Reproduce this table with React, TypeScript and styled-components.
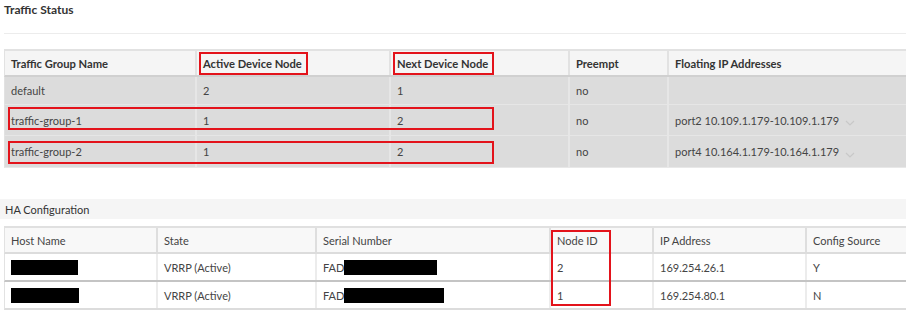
import React from 'react'
import styled, { createGlobalStyle } from 'styled-components'

const GlobalStyle = createGlobalStyle`
  html, body {
    margin: 0;
    padding: 0;
    background: #fff;
    font-family: Lato, "Open Sans", Arial, sans-serif;
    color: #333;
  }
`

const trafficCols = '192px 194px 179px 99px 1fr'
const haCols = '153px 159px 234px 103px 153px 1fr'

const trafficRows = [
  { name: 'default', active: '2', next: '1', preempt: 'no', ip: '', h: 28 },
  { name: 'traffic-group-1', active: '1', next: '2', preempt: 'no', ip: 'port2 10.109.1.179-10.109.1.179', h: 31 },
  { name: 'traffic-group-2', active: '1', next: '2', preempt: 'no', ip: 'port4 10.164.1.179-10.164.1.179', h: 32 },
]

const haRows = [
  { host: 67, serial: 93, state: 'VRRP (Active)', node: '2', ip: '169.254.26.1', src: 'Y' },
  { host: 68, serial: 100, state: 'VRRP (Active)', node: '1', ip: '169.254.80.1', src: 'N' },
]

const Page = styled.div`
  width: 906px;
  height: 323px;
  overflow: hidden;
  position: relative;
`

const Title = styled.div`
  height: 34px;
  box-sizing: border-box;
  padding: 2px 0 0 0;
  margin-left: 4px;
  font-size: 12px;
  font-weight: 700;
  color: #333;
  border-bottom: 1px solid #ececec;
`

const Table = styled.div`
  position: relative;
  margin: 15px 0 0 4px;
  width: 906px;
`

const Row = styled.div<{ $cols: string; $h: number; $bg: string; $line: string; $lineW?: number }>`
  display: grid;
  grid-template-columns: ${p => p.$cols};
  height: ${p => p.$h}px;
  box-sizing: border-box;
  background: ${p => p.$bg};
  border-bottom: ${p => p.$lineW ?? 1}px solid ${p => p.$line};
  border-left: 1px solid #e2e2e2;
`

const Cell = styled.div<{ $bold?: boolean; $sep: string }>`
  display: flex;
  align-items: center;
  padding-left: 6px;
  font-size: ${p => (p.$bold ? 11.2 : 11)}px;
  font-weight: ${p => (p.$bold ? 700 : 400)};
  color: ${p => (p.$bold ? '#333' : '#444')};
  border-right: 2px solid ${p => p.$sep};
  white-space: nowrap;
  &:last-child {
    border-right: none;
  }
`

const TopBorder = styled.div`
  height: 2px;
  background: #e2e2e2;
`

const RedTag = styled.span`
  display: inline-flex;
  align-items: center;
  height: 23px;
  box-sizing: border-box;
  border: 2px solid #e3131b;
  padding: 0 4px 0 2px;
  margin-left: -4px;
`

const Mark = styled.div<{ $x: number; $y: number; $w: number; $h: number }>`
  position: absolute;
  left: ${p => p.$x}px;
  top: ${p => p.$y}px;
  width: ${p => p.$w}px;
  height: ${p => p.$h}px;
  box-sizing: border-box;
  border: 2px solid #e3131b;
  pointer-events: none;
`

const Chevron = styled.svg`
  margin-left: 6px;
  margin-top: 6px;
`

const SectionBand = styled.div`
  margin-top: 31px;
  height: 20px;
  background: #f5f5f5;
  display: flex;
  align-items: center;
  padding-left: 5px;
  font-size: 11px;
  color: #333;
`

const Redacted = styled.span<{ $w: number }>`
  display: inline-block;
  width: ${p => p.$w}px;
  height: 15px;
  background: #000;
`

const HaTable = styled.div`
  position: relative;
  margin: 7px 0 0 4px;
  width: 906px;
  border-top: 2px solid #e0e0e0;
`

const App: React.FC = () => {
  return (
    <Page>
      <GlobalStyle />
      <Title>Traffic Status</Title>

      <Table>
        <TopBorder />
        <Row $cols={trafficCols} $h={26} $bg="#f5f5f5" $line="#d0d0d0" $lineW={2}>
          <Cell $bold $sep="#e2e2e2">Traffic Group Name</Cell>
          <Cell $bold $sep="#e2e2e2"><RedTag>Active Device Node</RedTag></Cell>
          <Cell $bold $sep="#e2e2e2"><RedTag>Next Device Node</RedTag></Cell>
          <Cell $bold $sep="#e2e2e2">Preempt</Cell>
          <Cell $bold $sep="#e2e2e2">Floating IP Addresses</Cell>
        </Row>
        {trafficRows.map((r, i) => (
          <Row key={i} $cols={trafficCols} $h={r.h} $bg="#dcdcdc" $line={i === trafficRows.length - 1 ? '#e8e8e8' : '#e6e6e6'}>
            <Cell $sep="#e6e6e6">{r.name}</Cell>
            <Cell $sep="#e6e6e6">{r.active}</Cell>
            <Cell $sep="#e6e6e6">{r.next}</Cell>
            <Cell $sep="#e6e6e6">{r.preempt}</Cell>
            <Cell $sep="#e6e6e6">
              {r.ip}
              {r.ip && (
                <Chevron width="10" height="6" viewBox="0 0 10 6">
                  <path d="M1 1 L5 5 L9 1" fill="none" stroke="#c8c8c8" strokeWidth="1.2" />
                </Chevron>
              )}
            </Cell>
          </Row>
        ))}
        <Mark $x={4} $y={58} $w={486} $h={23} />
        <Mark $x={4} $y={92} $w={486} $h={23} />
      </Table>

      <SectionBand>HA Configuration</SectionBand>

      <HaTable>
        <Row $cols={haCols} $h={26} $bg="#f8f8f8" $line="#dcdcdc" $lineW={2}>
          <Cell $sep="#dedede">Host Name</Cell>
          <Cell $sep="#dedede">State</Cell>
          <Cell $sep="#dedede">Serial Number</Cell>
          <Cell $sep="#dedede">Node ID</Cell>
          <Cell $sep="#dedede">IP Address</Cell>
          <Cell $sep="#dedede">Config Source</Cell>
        </Row>
        {haRows.map((r, i) => (
          <Row key={i} $cols={haCols} $h={28} $bg="#fff" $line={i === 0 ? '#c4c4c4' : '#dcdcdc'} $lineW={2}>
            <Cell $sep="#ececec"><Redacted $w={r.host} /></Cell>
            <Cell $sep="#ececec">{r.state}</Cell>
            <Cell $sep="#ececec">FAD<Redacted $w={r.serial} /></Cell>
            <Cell $sep="#ececec">{r.node}</Cell>
            <Cell $sep="#ececec">{r.ip}</Cell>
            <Cell $sep="#ececec">{r.src}</Cell>
          </Row>
        ))}
        <Mark $x={547} $y={2} $w={60} $h={76} />
      </HaTable>
    </Page>
  )
}

export default App
